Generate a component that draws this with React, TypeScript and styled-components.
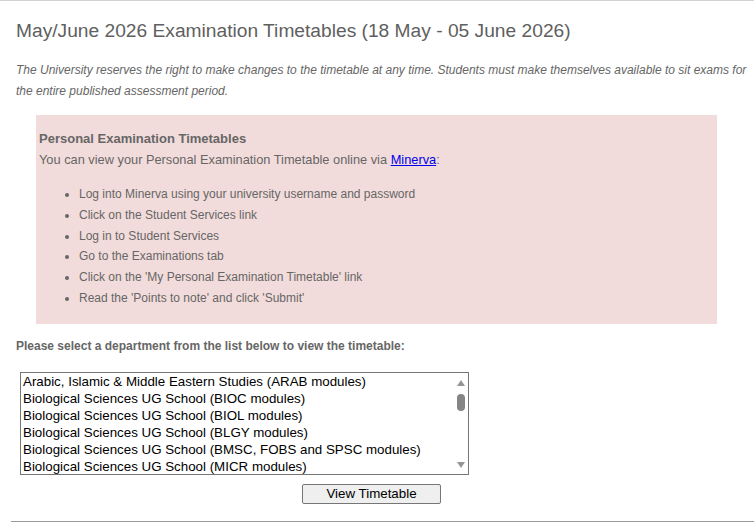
import React from 'react';
import styled, { createGlobalStyle } from 'styled-components';

const GlobalStyle = createGlobalStyle`
  html, body {
    margin: 0;
    padding: 0;
    background: #fff;
  }
  body {
    font-family: "Liberation Sans", Arial, sans-serif;
    border-top: 1px solid #d2d2d2;
  }
`;

const Page = styled.div`
  padding: 0 0 0 16px;
  color: #666;
`;

const Title = styled.h1`
  margin: 0;
  padding-top: 17px;
  font-size: 19.2px;
  line-height: 26px;
  font-weight: normal;
  color: #5f5f5f;
`;

const Notice = styled.p`
  margin: 16px 0 0;
  font-size: 12px;
  line-height: 21px;
  font-style: italic;
  color: #666;
`;

const InfoBox = styled.div`
  margin: 13px 0 0 20px;
  width: 681px;
  box-sizing: border-box;
  padding: 13px 3px 15px;
  background: #f2dcdb;
  font-size: 12.8px;
  line-height: 21px;
  color: #666;
`;

const BoxTitle = styled.div`
  font-weight: bold;
  font-size: 13px;
`;

const Link = styled.a`
  color: #0000ee;
  text-decoration: underline;
`;

const Steps = styled.ul`
  margin: 14px 0 0;
  padding-left: 40px;
  list-style: disc;
`;

const Step = styled.li`
  font-size: 12px;
  line-height: 20.8px;
  &::marker {
    font-size: 12px;
  }
`;

const Prompt = styled.p`
  margin: 14px 0 0;
  font-size: 12px;
  line-height: 16px;
  font-weight: bold;
  color: #666;
`;

const Form = styled.form`
  margin: 18px 0 0 4px;
  display: flex;
  flex-direction: column;
`;

const ListBox = styled.div`
  width: 449px;
  height: 103px;
  box-sizing: border-box;
  border: 1px solid #767676;
  display: flex;
  background: #fff;
`;

const Options = styled.div`
  flex: 1;
  padding: 0 2px;
  overflow: hidden;
`;

const Option = styled.div`
  font-size: 13.33px;
  line-height: 17px;
  height: 17px;
  color: #000;
  white-space: nowrap;
`;

const Scrollbar = styled.div`
  width: 15px;
  display: flex;
  flex-direction: column;
  align-items: center;
  padding: 7px 0 6px;
  box-sizing: border-box;
`;

const Arrow = styled.div<{ $dir: 'up' | 'down' }>`
  width: 0;
  height: 0;
  border-left: 4.5px solid transparent;
  border-right: 4.5px solid transparent;
  ${p => p.$dir === 'up'
    ? 'border-bottom: 6px solid #959595;'
    : 'border-top: 6px solid #959595;'}
`;

const Track = styled.div`
  flex: 1;
  display: flex;
  flex-direction: column;
  align-items: center;
  padding-top: 8px;
`;

const Thumb = styled.div`
  width: 8px;
  height: 17px;
  border-radius: 4px;
  background: #858585;
`;

const Submit = styled.button`
  margin: 9px 0 0 282px;
  width: 139px;
  height: 20px;
  padding: 0;
  font-family: "Liberation Sans", Arial, sans-serif;
  font-size: 13.33px;
  color: #000;
  background: #efefef;
  border: 1px solid #767676;
  border-radius: 2px;
`;

const Rule = styled.hr`
  margin: 17px 0 0 -5px;
  border: none;
  border-top: 1px solid #9a9a9a;
  height: 0;
`;

const steps = [
  'Log into Minerva using your university username and password',
  'Click on the Student Services link',
  'Log in to Student Services',
  'Go to the Examinations tab',
  "Click on the 'My Personal Examination Timetable' link",
  "Read the 'Points to note' and click 'Submit'",
];

const departments = [
  'Arabic, Islamic & Middle Eastern Studies (ARAB modules)',
  'Biological Sciences UG School (BIOC modules)',
  'Biological Sciences UG School (BIOL modules)',
  'Biological Sciences UG School (BLGY modules)',
  'Biological Sciences UG School (BMSC, FOBS and SPSC modules)',
  'Biological Sciences UG School (MICR modules)',
];

export default function App() {
  return (
    <>
      <GlobalStyle />
      <Page>
        <Title>May/June 2026 Examination Timetables (18 May - 05 June 2026)</Title>
        <Notice>
          The University reserves the right to make changes to the timetable at any time. Students must make
          themselves available to sit exams for the entire published assessment period.
        </Notice>
        <InfoBox>
          <BoxTitle>Personal Examination Timetables</BoxTitle>
          <div>
            You can view your Personal Examination Timetable online via <Link href="#">Minerva</Link>:
          </div>
          <Steps>
            {steps.map(s => (
              <Step key={s}>{s}</Step>
            ))}
          </Steps>
        </InfoBox>
        <Prompt>Please select a department from the list below to view the timetable:</Prompt>
        <Form onSubmit={e => e.preventDefault()}>
          <ListBox role="listbox">
            <Options>
              {departments.map(d => (
                <Option key={d} role="option">{d}</Option>
              ))}
            </Options>
            <Scrollbar>
              <Arrow $dir="up" />
              <Track>
                <Thumb />
              </Track>
              <Arrow $dir="down" />
            </Scrollbar>
          </ListBox>
          <Submit type="submit">View Timetable</Submit>
        </Form>
        <Rule />
      </Page>
    </>
  );
}
